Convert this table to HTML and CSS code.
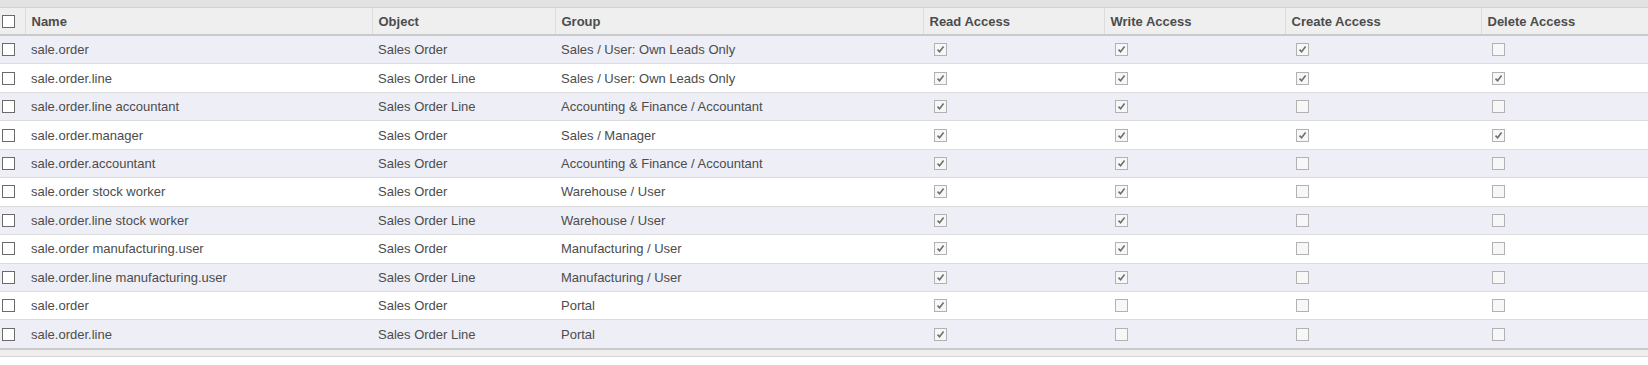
FILE: index.html
```html
<!DOCTYPE html>
<html>
<head>
<meta charset="utf-8">
<link rel="stylesheet" href="styles.css">
</head>
<body>
<div class="topband"></div>
<table class="list">
  <colgroup>
    <col class="c-sel"><col class="c-name"><col class="c-obj"><col class="c-grp">
    <col class="c-r"><col class="c-w"><col class="c-c"><col class="c-d">
  </colgroup>
  <thead>
    <tr>
      <th class="sel"><span class="cb"></span></th>
      <th>Name</th><th>Object</th><th>Group</th>
      <th>Read Access</th><th>Write Access</th><th>Create Access</th><th>Delete Access</th>
    </tr>
  </thead>
  <tbody id="rows"></tbody>
  <tfoot><tr><td colspan="8"></td></tr></tfoot>
</table>
<script src="app.js"></script>
</body>
</html>
```

FILE: app.js
```js
const data = [
  ["sale.order","Sales Order","Sales / User: Own Leads Only",1,1,1,0],
  ["sale.order.line","Sales Order Line","Sales / User: Own Leads Only",1,1,1,1],
  ["sale.order.line accountant","Sales Order Line","Accounting & Finance / Accountant",1,1,0,0],
  ["sale.order.manager","Sales Order","Sales / Manager",1,1,1,1],
  ["sale.order.accountant","Sales Order","Accounting & Finance / Accountant",1,1,0,0],
  ["sale.order stock worker","Sales Order","Warehouse / User",1,1,0,0],
  ["sale.order.line stock worker","Sales Order Line","Warehouse / User",1,1,0,0],
  ["sale.order manufacturing.user","Sales Order","Manufacturing / User",1,1,0,0],
  ["sale.order.line manufacturing.user","Sales Order Line","Manufacturing / User",1,1,0,0],
  ["sale.order","Sales Order","Portal",1,0,0,0],
  ["sale.order.line","Sales Order Line","Portal",1,0,0,0]
];
const check = '<svg class="tick" viewBox="0 0 9 9" width="9" height="9"><path d="M1.5 4.6 L3.6 6.8 L7.6 1.6" fill="none" stroke="#6f6f6f" stroke-width="1.6"/></svg>';
const esc = s => s.replace(/&/g,"&amp;");
const tb = document.getElementById("rows");
tb.innerHTML = data.map(r => {
  const boxes = r.slice(3).map(v => `<td class="bool"><span class="dcb">${v ? check : ""}</span></td>`).join("");
  return `<tr><td class="sel"><span class="cb"></span></td><td>${esc(r[0])}</td><td>${esc(r[1])}</td><td>${esc(r[2])}</td>${boxes}</tr>`;
}).join("");
```

FILE: styles.css
```css
html, body {
  margin: 0;
  padding: 0;
  background: #ffffff;
}
body {
  font-family: "Liberation Sans", Arial, sans-serif;
  font-size: 13px;
  color: #4c4c4c;
}
.topband {
  height: 7px;
  background: #e2e2e2;
  border-bottom: 1px solid #d2d2d2;
}
.list {
  width: 1648px;
  border-collapse: collapse;
  table-layout: fixed;
}
.c-sel { width: 25px; }
.c-name { width: 347px; }
.c-obj { width: 183px; }
.c-grp { width: 368px; }
.c-r { width: 181px; }
.c-w { width: 181px; }
.c-c { width: 196px; }
.c-d { width: 167px; }

.list thead th {
  background: #efefef;
  height: 26px;
  padding: 0 0 0 6px;
  text-align: left;
  font-weight: bold;
  color: #4c4c4c;
  border-left: 1px solid #dcdcdc;
  border-bottom: 2px solid #cacaca;
  white-space: nowrap;
}
.list thead th.sel {
  border-left: none;
  padding: 0 0 0 2px;
}
.list tbody td {
  height: 27.45px;
  padding: 0 0 0 6px;
  border-top: 1px solid #dcdcdc;
  white-space: nowrap;
  vertical-align: middle;
}
.list tbody tr:first-child td { border-top: none; }
.list tbody tr:nth-child(odd) td { background: #eeeef6; }
.list tbody td.sel { padding: 0 0 0 2px; }
.list tbody td.bool { padding: 0 0 0 11px; }

.cb {
  display: block;
  width: 11px;
  height: 11px;
  border: 1px solid #6a6a6a;
  background: #ffffff;
}
.dcb {
  display: flex;
  align-items: center;
  justify-content: center;
  width: 11px;
  height: 11px;
  border: 1px solid #b2b2b2;
  background: #f7f7f7;
}
.tick { display: block; }

.list tfoot td {
  height: 6px;
  padding: 0;
  background: #efefef;
  border-top: 2px solid #cacaca;
  border-bottom: 1px solid #d6d6d6;
}
```
